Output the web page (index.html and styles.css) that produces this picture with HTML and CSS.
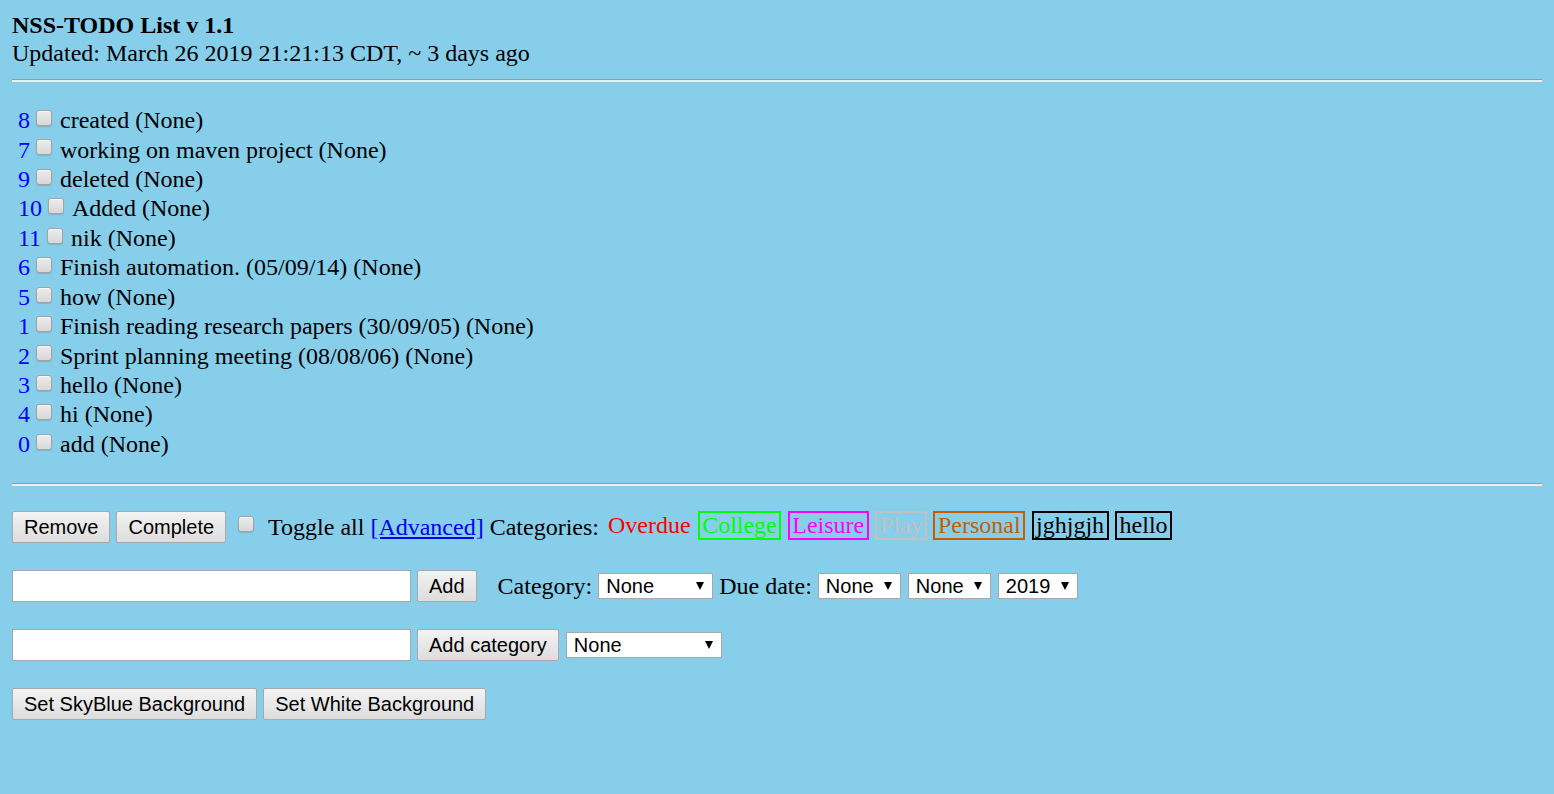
FILE: index.html
```html
<!DOCTYPE html>
<html>
<head>
<meta charset="utf-8">
<title>NSS-TODO List v 1.1</title>
<link rel="stylesheet" href="styles.css">
</head>
<body>
<div class="header">
  <div class="title">NSS-TODO List v 1.1</div>
  <div class="updated">Updated: March 26 2019 21:21:13 CDT, ~ 3 days ago</div>
</div>
<hr class="rule">
<form class="todo-list">
  <div class="item"><a class="num" href="#">8</a><input class="cb" type="checkbox"><span class="label">created (None)</span></div>
  <div class="item"><a class="num" href="#">7</a><input class="cb" type="checkbox"><span class="label">working on maven project (None)</span></div>
  <div class="item"><a class="num" href="#">9</a><input class="cb" type="checkbox"><span class="label">deleted (None)</span></div>
  <div class="item"><a class="num" href="#">10</a><input class="cb" type="checkbox"><span class="label">Added (None)</span></div>
  <div class="item"><a class="num" href="#">11</a><input class="cb" type="checkbox"><span class="label">nik (None)</span></div>
  <div class="item"><a class="num" href="#">6</a><input class="cb" type="checkbox"><span class="label">Finish automation. (05/09/14) (None)</span></div>
  <div class="item"><a class="num" href="#">5</a><input class="cb" type="checkbox"><span class="label">how (None)</span></div>
  <div class="item"><a class="num" href="#">1</a><input class="cb" type="checkbox"><span class="label">Finish reading research papers (30/09/05) (None)</span></div>
  <div class="item"><a class="num" href="#">2</a><input class="cb" type="checkbox"><span class="label">Sprint planning meeting (08/08/06) (None)</span></div>
  <div class="item"><a class="num" href="#">3</a><input class="cb" type="checkbox"><span class="label">hello (None)</span></div>
  <div class="item"><a class="num" href="#">4</a><input class="cb" type="checkbox"><span class="label">hi (None)</span></div>
  <div class="item"><a class="num" href="#">0</a><input class="cb" type="checkbox"><span class="label">add (None)</span></div>
</form>
<hr class="rule">
<div class="row">
  <button class="btn" type="button">Remove</button>
  <button class="btn gap6" type="button">Complete</button>
  <input class="cb toggle" type="checkbox">
  <span class="text toggle-text">Toggle all <a class="adv" href="#">[Advanced]</a> Categories:</span>
  <div class="cats">
    <span class="cat overdue">Overdue</span>
    <span class="cat college">College</span>
    <span class="cat leisure">Leisure</span>
    <span class="cat play">Play</span>
    <span class="cat personal">Personal</span>
    <span class="cat plain">jghjgjh</span>
    <span class="cat plain">hello</span>
  </div>
</div>
<div class="row">
  <input class="field" type="text">
  <button class="btn gap6" type="button">Add</button>
  <span class="text cat-label">Category:</span>
  <span class="select-wrap gap6"><select class="sel w115"><option>None</option></select></span>
  <span class="text gap6">Due date:</span>
  <span class="select-wrap gap6"><select class="sel w83"><option>None</option></select></span>
  <span class="select-wrap gap7"><select class="sel w83"><option>None</option></select></span>
  <span class="select-wrap gap7"><select class="sel w80"><option>2019</option></select></span>
</div>
<div class="row">
  <input class="field" type="text">
  <button class="btn gap6" type="button">Add category</button>
  <span class="select-wrap gap7"><select class="sel w156"><option>None</option></select></span>
</div>
<div class="row">
  <button class="btn" type="button">Set SkyBlue Background</button>
  <button class="btn gap6" type="button">Set White Background</button>
</div>
</body>
</html>
```
FILE: styles.css
```css
html, body {
  background: #87ceeb;
}
body {
  margin: 12px;
  font-family: "Liberation Serif", "Times New Roman", serif;
  font-size: 24px;
  color: #000;
}
.header {
  line-height: 27.6px;
}
.title {
  font-weight: bold;
}
.rule {
  margin: 12px 0;
  height: 0;
  border: none;
  border-top: 1px solid #9a9a9a;
  border-bottom: 2px solid #eeeeee;
}
.todo-list {
  margin: 24px 0;
}
.item {
  display: flex;
  align-items: center;
  height: 29.45px;
  padding-left: 6px;
  line-height: 27.6px;
  white-space: nowrap;
}
.num {
  color: #0000ff;
  text-decoration: none;
}
.cb {
  -webkit-appearance: none;
  appearance: none;
  box-sizing: border-box;
  width: 16px;
  height: 16px;
  margin: 0 8px 6px 6px;
  border: 1px solid #a3a3a3;
  border-radius: 3px;
  background: linear-gradient(#ececec, #d8d8d8);
  box-shadow: inset 0 1px 0 #f8f8f8, 0 1px 1px rgba(0, 0, 0, 0.12);
  flex: none;
}
.row {
  display: flex;
  align-items: center;
  height: 34px;
  margin: 24px 0 25px;
  line-height: 27.6px;
  white-space: nowrap;
}
.btn {
  box-sizing: border-box;
  height: 32px;
  padding: 0 11px;
  margin: 0;
  border: 1px solid #a9a9a9;
  border-radius: 2px;
  background: linear-gradient(#f3f3f3, #dddddd);
  font-family: "Liberation Sans", Arial, sans-serif;
  font-size: 20px;
  color: #000;
  flex: none;
}
.gap6 { margin-left: 6px; }
.gap7 { margin-left: 7px; }
.gap8 { margin-left: 8px; }
.toggle {
  margin: 0 0 7px 12px;
}
.toggle-text {
  margin-left: 14px;
}
.adv {
  color: #0000ee;
  text-decoration: underline;
}
.cats {
  display: flex;
  align-items: center;
  margin-left: 5px;
  margin-bottom: 3px;
}
.cat {
  display: inline-block;
  line-height: 25px;
  padding: 0 2.5px;
  border: 2px solid transparent;
  margin-right: 6.5px;
}
.overdue { color: #ff0000; margin-right: 3px; padding: 0 2px; }
.college { color: #00ff00; border-color: #00ff00; }
.leisure { color: #ff00ff; border-color: #ff00ff; }
.play { color: #c0c0c0; border-color: #c0c0c0; }
.personal { color: #c45f00; border-color: #c45f00; }
.plain { color: #000; border-color: #000; }
.field {
  box-sizing: border-box;
  width: 399px;
  height: 32px;
  margin: 0;
  padding: 1px 4px;
  border: 1px solid #a9a9a9;
  background: #fff;
  font-family: "Liberation Sans", Arial, sans-serif;
  font-size: 20px;
  flex: none;
}
.cat-label {
  margin-left: 21px;
}
.select-wrap {
  position: relative;
  display: inline-flex;
  flex: none;
}
.select-wrap::after {
  content: "";
  position: absolute;
  right: 9px;
  top: 50%;
  margin-top: -4px;
  border-left: 4.5px solid transparent;
  border-right: 4.5px solid transparent;
  border-top: 8.5px solid #000;
  pointer-events: none;
}
.sel {
  -webkit-appearance: none;
  appearance: none;
  box-sizing: border-box;
  height: 26px;
  margin: 0;
  padding: 0 0 0 7px;
  border: 1px solid #a9a9a9;
  border-radius: 0;
  background: #fff;
  color: #000;
  font-family: "Liberation Sans", Arial, sans-serif;
  font-size: 20px;
  line-height: 24px;
}
.w115 { width: 115px; }
.w83 { width: 83px; }
.w80 { width: 80px; }
.w156 { width: 156px; }
```
